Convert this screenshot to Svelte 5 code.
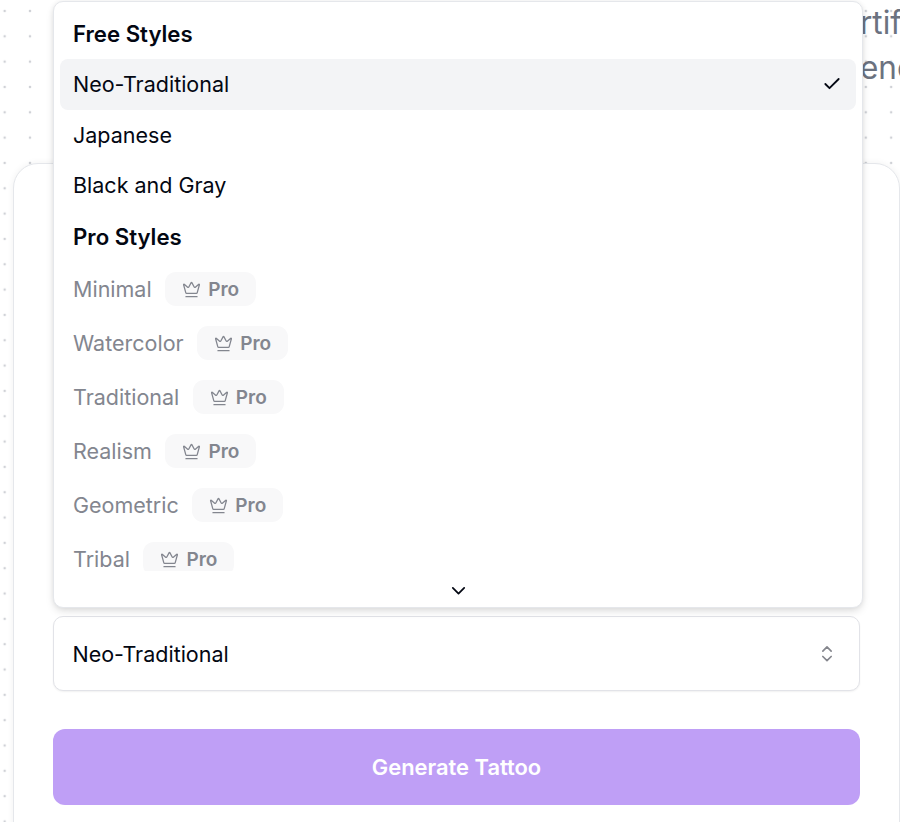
<script>
  const freeStyles = ["Neo-Traditional", "Japanese", "Black and Gray"];
  const proStyles = ["Minimal", "Watercolor", "Traditional", "Realism", "Geometric", "Tribal"];

  let selected = $state("Neo-Traditional");
</script>

<div class="page">
  <header class="hero">
    <p><span class="lead">Design your next piece with our a</span><span>rtificial intelligence</span></p>
    <p><span class="lead">A tattoo g</span><span>enerator for everyone</span></p>
  </header>

  <main class="card">
    <div class="field">
      <div class="dropdown">
        <div class="list">
          <div class="group-label">Free Styles</div>
          {#each freeStyles as style}
            <button class="item" class:active={selected === style} onclick={() => (selected = style)}>
              <span>{style}</span>
              {#if selected === style}
                <svg class="check" viewBox="0 0 24 24" fill="none" stroke="currentColor" stroke-width="2.2" stroke-linecap="round" stroke-linejoin="round">
                  <path d="M20 6 9 17l-5-5" />
                </svg>
              {/if}
            </button>
          {/each}

          <div class="group-label">Pro Styles</div>
          {#each proStyles as style}
            <div class="item pro">
              <span>{style}</span>
              <span class="badge">
                <svg viewBox="0 0 24 24" fill="none" stroke="currentColor" stroke-width="1.6" stroke-linecap="round" stroke-linejoin="round">
                  <path d="M11.562 3.266a.5.5 0 0 1 .876 0L15.39 8.87a1 1 0 0 0 1.516.294L21.183 5.5a.5.5 0 0 1 .798.519l-2.834 10.246a1 1 0 0 1-.956.734H5.81a1 1 0 0 1-.957-.734L2.02 6.02a.5.5 0 0 1 .798-.519l4.276 3.664a1 1 0 0 0 1.516-.294z" />
                  <path d="M5 21h14" />
                </svg>
                Pro
              </span>
            </div>
          {/each}
        </div>
        <div class="scroll-down">
          <svg viewBox="0 0 24 24" fill="none" stroke="currentColor" stroke-width="2" stroke-linecap="round" stroke-linejoin="round">
            <path d="m5.5 9 6.5 6.5L18.500 9" />
          </svg>
        </div>
      </div>

      <button class="trigger">
        <span>{selected}</span>
        <svg viewBox="0 0 24 24" fill="none" stroke="currentColor" stroke-width="2" stroke-linecap="round" stroke-linejoin="round">
          <path d="m7 8.500 5-5 5 5" />
          <path d="m7 15 5 5 5-5" />
        </svg>
      </button>
    </div>

    <button class="generate">Generate Tattoo</button>
  </main>
</div>

<style>
  :global(body) {
    margin: 0;
    overflow: hidden;
  }

  .page {
    height: 822px;
    overflow: hidden;
    font-family: Inter, "Liberation Sans", sans-serif;
    background-color: #fff;
    background-image: radial-gradient(circle, #cfd1d6 1.2px, transparent 1.6px);
    background-size: 25.33px 25.33px;
    background-position: -8px -1.7px;
  }

  .hero {
    height: 163px;
    margin-left: 60px;
  }

  .hero p {
    display: grid;
    grid-template-columns: 800px max-content;
    margin: 0;
    height: 45px;
    line-height: 45px;
    font-size: 31.5px;
    color: #6b7280;
    white-space: pre;
  }

  .lead {
    text-align: right;
    overflow: hidden;
  }

  .card {
    box-sizing: border-box;
    width: 887px;
    height: 700px;
    margin-left: 13px;
    padding: 452px 38px 0 39px;
    background: #fff;
    border: 1.5px solid #e5e7eb;
    border-radius: 25px;
    box-shadow: 0 0 7px rgba(0, 0, 0, 0.06);
  }

  .field {
    position: relative;
  }

  .dropdown {
    position: absolute;
    left: 0;
    bottom: calc(100% + 8px);
    box-sizing: border-box;
    width: 810px;
    height: 607px;
    background: #fff;
    border: 1.5px solid #e5e7eb;
    border-radius: 10px;
    box-shadow: 0 4px 8px -1px rgba(0, 0, 0, 0.13), 0 0 5px rgba(0, 0, 0, 0.06);
  }

  .list {
    height: 569px;
    overflow: hidden;
    padding: 6px 6px 0;
    box-sizing: border-box;
  }

  .group-label {
    height: 51px;
    line-height: 51px;
    padding-left: 13px;
    font-size: 22.2px;
    font-weight: 600;
    color: #030712;
  }

  .item {
    display: flex;
    align-items: center;
    box-sizing: border-box;
    width: 100%;
    height: 50.6px;
    padding: 0 13px;
    border: none;
    border-radius: 8px;
    background: none;
    font: inherit;
    font-size: 21.5px;
    color: #030712;
    text-align: left;
  }

  .item.active {
    background: #f3f4f6;
  }

  .check {
    width: 20px;
    height: 20px;
    margin-left: auto;
    margin-right: 1px;
  }

  .item.pro {
    height: 54px;
    gap: 13.5px;
    color: #83868f;
  }

  .badge {
    display: inline-flex;
    align-items: center;
    gap: 7px;
    box-sizing: border-box;
    height: 34px;
    padding: 1px 17px 0;
    border-radius: 11px;
    background: #f8f8f9;
    font-size: 19px;
    font-weight: 600;
  }

  .badge svg {
    width: 19px;
    height: 19px;
  }

  .scroll-down {
    display: flex;
    align-items: center;
    justify-content: center;
    height: 39px;
    color: #030712;
  }

  .scroll-down svg {
    width: 21px;
    height: 21px;
  }

  .trigger {
    display: flex;
    align-items: center;
    justify-content: space-between;
    box-sizing: border-box;
    width: 807px;
    height: 75px;
    padding: 0 22px 0 18.5px;
    background: #fff;
    border: 1.5px solid #e2e3e8;
    border-radius: 10px;
    box-shadow: 0 1px 2px rgba(0, 0, 0, 0.06);
    font: inherit;
    font-size: 21.5px;
    color: #030712;
  }

  .trigger svg {
    width: 20px;
    height: 20px;
    color: #85868d;
  }

  .generate {
    display: block;
    width: 807px;
    height: 76px;
    margin-top: 38px;
    border: none;
    border-radius: 12px;
    background: #bf9ff6;
    color: #fff;
    font: inherit;
    font-size: 21.9px;
    font-weight: 600;
  }
</style>
